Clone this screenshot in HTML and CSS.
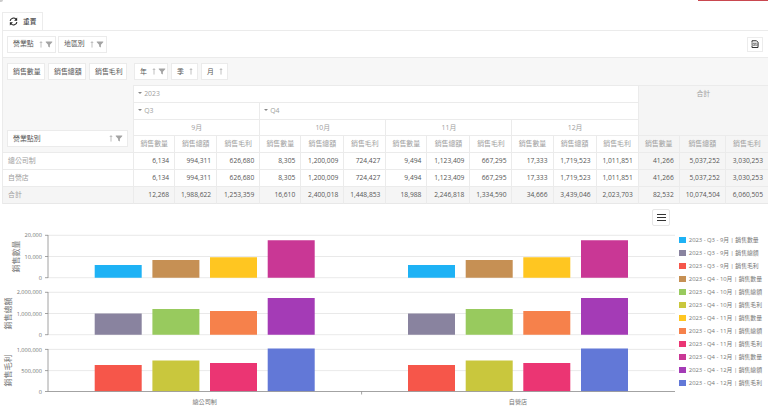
FILE: index.html
```html
<!DOCTYPE html>
<html lang="zh-Hant">
<head>
<meta charset="utf-8">
<title>銷售分析</title>
<link rel="stylesheet" href="styles.css">
</head>
<body>
<svg class="defs" width="0" height="0">
  <symbol id="sort" viewBox="0 0 4 8"><path d="M2 7.5V.8M.6 2.3 2 .8 3.4 2.3" fill="none" stroke="#999" stroke-width=".7"/></symbol>
  <symbol id="funnel" viewBox="0 0 8 8"><path d="M.3.5h7.4v1L5 4.3v3.2L3 6.2V4.3L.3 1.5z" fill="#a3a3a3"/></symbol>
</svg>
<header class="top"><span class="corner"></span><span class="alert"></span></header>
<div class="tab">
  <svg class="sync" viewBox="0 0 16 16"><path d="M2 7a6 6 0 0 1 10.5-3M14 9a6 6 0 0 1-10.5 3" fill="none" stroke="#222" stroke-width="2"/><path d="M14.500 1v5.500H9zM1.500 15V9.500H7z" fill="#222"/></svg>
  <span>重置</span>
</div>
<main class="pivot">
  <div class="filters">
    <div class="field f1">營業點<svg class="sort"><use href="#sort"/></svg><svg class="funnel"><use href="#funnel"/></svg></div>
    <div class="field f2">地區別<svg class="sort"><use href="#sort"/></svg><svg class="funnel"><use href="#funnel"/></svg></div>
    <div class="export"><svg viewBox="0 0 16 16"><path d="M2 5V1.500h9L14 4.500V15H2v-3" fill="none" stroke="#333" stroke-width="2"/><path d="M1 5.500h14v6H1z" fill="#777"/><path d="M3 7l3 3M6 7l-3 3M8 7v3h2M13 7h-2v3h2" fill="none" stroke="#fff"/></svg></div>
  </div>
  <div class="fields">
    <div class="data">
      <div class="field d1">銷售數量</div><div class="field d2">銷售總額</div><div class="field d3">銷售毛利</div>
    </div>
    <div class="cols">
      <div class="field c1">年<svg class="sort"><use href="#sort"/></svg><svg class="funnel"><use href="#funnel"/></svg></div>
      <div class="field c2">季<svg class="sort"><use href="#sort"/></svg></div>
      <div class="field c3">月<svg class="sort"><use href="#sort"/></svg></div>
    </div>
  </div>
  <table>
    <colgroup><col class="w130"><col class="w41"><col class="w42"><col class="w43"><col class="w41"><col class="w43"><col class="w42"><col class="w41"><col class="w43"><col class="w42"><col class="w41"><col class="w43"><col class="w42"><col class="w41"><col class="w46"><col class="w43"></colgroup>
    <thead>
      <tr><th class="rowarea" rowspan="4"><div class="field rf">營業點別<svg class="sort"><use href="#sort"/></svg><svg class="funnel"><use href="#funnel"/></svg></div></th><th class="exp" colspan="12"><i></i>2023</th><th class="grand" colspan="3" rowspan="3">合計</th></tr>
      <tr><th class="exp" colspan="3"><i></i>Q3</th><th class="exp" colspan="9"><i></i>Q4</th></tr>
      <tr class="months"><th colspan="3">9月</th><th colspan="3">10月</th><th colspan="3">11月</th><th colspan="3">12月</th></tr>
      <tr><th>銷售數量</th><th>銷售總額</th><th>銷售毛利</th><th>銷售數量</th><th>銷售總額</th><th>銷售毛利</th><th>銷售數量</th><th>銷售總額</th><th>銷售毛利</th><th>銷售數量</th><th>銷售總額</th><th>銷售毛利</th><th class="g">銷售數量</th><th class="g">銷售總額</th><th class="g">銷售毛利</th></tr>
    </thead>
    <tbody>
      <tr><th>總公司制</th><td>6,134</td><td>994,311</td><td>626,680</td><td>8,305</td><td>1,200,009</td><td>724,427</td><td>9,494</td><td>1,123,409</td><td>667,295</td><td>17,333</td><td>1,719,523</td><td>1,011,851</td><td class="g">41,266</td><td class="g">5,037,252</td><td class="g">3,030,253</td></tr>
      <tr><th>自營店</th><td>6,134</td><td>994,311</td><td>626,680</td><td>8,305</td><td>1,200,009</td><td>724,427</td><td>9,494</td><td>1,123,409</td><td>667,295</td><td>17,333</td><td>1,719,523</td><td>1,011,851</td><td class="g">41,266</td><td class="g">5,037,252</td><td class="g">3,030,253</td></tr>
      <tr class="total"><th>合計</th><td>12,268</td><td>1,988,622</td><td>1,253,359</td><td>16,610</td><td>2,400,018</td><td>1,448,853</td><td>18,988</td><td>2,246,818</td><td>1,334,590</td><td>34,666</td><td>3,439,046</td><td>2,023,703</td><td class="g">82,532</td><td class="g">10,074,504</td><td class="g">6,060,505</td></tr>
    </tbody>
  </table>
</main>
<section class="chart">
  <svg class="plot" viewBox="0 204 676 202" width="676" height="202">
    <g class="grid">
      <path d="M48 235.300H675M48 256.500H675M48 277.700H675M48 292.300H675M48 313.500H675M48 334.700H675M48 349.400H675M48 370.600H675"/>
    </g>
    <g>
      <path fill="#1eb2f5" d="M94.700 265h47v12.800h-47zM408 265h47v12.800h-47z"/>
      <path fill="#c69054" d="M152.400 260h47v17.800h-47zM465.700 260h47v17.800h-47z"/>
      <path fill="#ffc621" d="M210 257.300h47v20.500h-47zM523.300 257.300h47v20.500h-47z"/>
      <path fill="#c93795" d="M267.700 240.300h47v37.500h-47zM581 240.300h47v37.500h-47z"/>
      <path fill="#89839f" d="M94.700 313.600h47v21.200h-47zM408 313.600h47v21.200h-47z"/>
      <path fill="#98ca5e" d="M152.400 309h47v25.800h-47zM465.700 309h47v25.800h-47z"/>
      <path fill="#f6814b" d="M210 311h47v23.800h-47zM523.300 311h47v23.800h-47z"/>
      <path fill="#a43bb6" d="M267.700 298h47v36.800h-47zM581 298h47v36.800h-47z"/>
      <path fill="#f6564a" d="M94.700 365h47v26.300h-47zM408 365h47v26.300h-47z"/>
      <path fill="#c9c73d" d="M152.400 360.500h47v30.800h-47zM465.700 360.500h47v30.800h-47z"/>
      <path fill="#eb3573" d="M210 363h47v28.300h-47zM523.300 363h47v28.300h-47z"/>
      <path fill="#6278d7" d="M267.700 348.400h47v42.900h-47zM581 348.400h47v42.900h-47z"/>
    </g>
    <path class="axis" d="M48 235v43M48 292v43M48 349v42.500H675M45 235.300h3M45 256.500h3M45 277.700h3M45 292.300h3M45 313.500h3M45 334.700h3M45 349.400h3M45 370.600h3M45 391.500h3M361.600 391.500v3"/>
    <g class="ticks">
      <text x="42" y="237.400">20,000</text><text x="42" y="258.700">10,000</text><text x="42" y="280">0</text>
      <text x="42" y="294.400">2,000,000</text><text x="42" y="315.700">1,000,000</text><text x="42" y="337">0</text>
      <text x="42" y="351.500">1,000,000</text><text x="42" y="372.800">500,000</text><text x="42" y="394">0</text>
    </g>
    <g class="titles">
      <text transform="translate(19.200 256.500) rotate(-90)">銷售數量</text>
      <text transform="translate(11.200 313.500) rotate(-90)">銷售總額</text>
      <text transform="translate(11.200 370.500) rotate(-90)">銷售毛利</text>
    </g>
    <g class="cats"><text x="204.700" y="403.600">總公司制</text><text x="518" y="403.600">自營店</text></g>
  </svg>
  <aside>
    <div class="menu"><i></i><i></i><i></i></div>
    <ul>
      <li><b class="k1"></b>2023 - Q3 - 9月 | 銷售數量</li>
      <li><b class="k2"></b>2023 - Q3 - 9月 | 銷售總額</li>
      <li><b class="k3"></b>2023 - Q3 - 9月 | 銷售毛利</li>
      <li><b class="k4"></b>2023 - Q4 - 10月 | 銷售數量</li>
      <li><b class="k5"></b>2023 - Q4 - 10月 | 銷售總額</li>
      <li><b class="k6"></b>2023 - Q4 - 10月 | 銷售毛利</li>
      <li><b class="k7"></b>2023 - Q4 - 11月 | 銷售數量</li>
      <li><b class="k8"></b>2023 - Q4 - 11月 | 銷售總額</li>
      <li><b class="k9"></b>2023 - Q4 - 11月 | 銷售毛利</li>
      <li><b class="k10"></b>2023 - Q4 - 12月 | 銷售數量</li>
      <li><b class="k11"></b>2023 - Q4 - 12月 | 銷售總額</li>
      <li><b class="k12"></b>2023 - Q4 - 12月 | 銷售毛利</li>
    </ul>
  </aside>
</section>
</body>
</html>
```
FILE: styles.css
```css
* { box-sizing: border-box; }
body {
  margin: 0;
  width: 768px;
  height: 406px;
  overflow: hidden;
  background: #fff;
  color: #555;
  font: 6.7px/10px "Open Sans", "Noto Sans CJK TC", sans-serif;
}
.defs { position: absolute; }
.top { display: flex; justify-content: space-between; height: 12px; }
.corner { width: 3px; height: 2px; background: #ccc; border-bottom-right-radius: 3px; }
.alert { width: 70px; height: 1px; background: #c9474f; }
.tab {
  display: flex;
  align-items: center;
  gap: 5px;
  width: 41px;
  height: 18px;
  margin-left: 2px;
  padding-left: 6px;
  border: 1px solid #ececec;
  border-bottom: 0;
  color: #333;
}
.sync { width: 9px; height: 9px; }
.pivot { width: 766px; margin-left: 2px; border-left: 1px solid #ebebeb; border-top: 1px solid #ebebeb; }
.filters { display: flex; align-items: center; gap: 2px; height: 26px; padding: 0 5px 0 4px; }
.field {
  display: flex;
  flex: none;
  align-items: center;
  height: 17px;
  padding-left: 5px;
  border: 1px solid #ebebeb;
  background: #fff;
  color: #555;
  font-size: 6.9px;
  white-space: nowrap;
}
.field .sort { flex: none; width: 4px; height: 7px; margin-left: 5px; }
.field .funnel { flex: none; width: 8px; height: 7px; margin-left: 2px; }
.f1 { width: 49px; }
.f2 { width: 49px; }
.export {
  display: flex;
  align-items: center;
  justify-content: center;
  width: 16px;
  height: 15px;
  margin-left: auto;
  border: 1px solid #ececec;
}
.export svg { width: 8px; height: 8px; }
.fields { display: flex; align-items: center; height: 28px; background: #f7f7f7; border-top: 1px solid #ebebeb; }
.data { display: flex; flex: none; gap: 3px; width: 130px; padding-left: 4px; }
.d1, .d2, .d3 { width: 38px; }
.cols { display: flex; gap: 3px; padding-left: 1px; }
.c1 { width: 34px; }
.c2, .c3 { width: 27px; }
table { table-layout: fixed; width: 765px; border-collapse: separate; border-spacing: 0; }
.w130 { width: 130px; }
.w41 { width: 41px; }
.w42 { width: 42px; }
.w43 { width: 43px; }
.w46 { width: 46px; }
th, td {
  height: 17px;
  padding: 0;
  border-left: 1px solid #ebebeb;
  border-top: 1px solid #ebebeb;
  text-align: center;
  font-weight: 400;
  line-height: 10px;
  white-space: nowrap;
}
th { color: #a0a0a0; font-size: 6.9px; }
td { padding-right: 5px; text-align: right; }
.months th { height: 16px; }
.exp { text-align: left; padding-left: 4px; }
.exp i {
  display: inline-block;
  margin: 0 2px 2px 0;
  border: 2px solid transparent;
  border-top-color: #888;
  border-bottom: 0;
}
.rowarea { vertical-align: bottom; padding: 0 5px 5px 4px; background: #f7f7f7; border: 0; }
.rf { width: 121px; }
.rf .sort { margin-left: auto; }
.rf .funnel { margin-right: 4px; }
.grand { vertical-align: top; padding-top: 3px; }
.grand, .g { background: #f5f5f5; }
tbody th { text-align: left; padding-left: 5px; border-left: 0; }
.total > * { height: 18px; background: #f5f5f5; border-bottom: 1px solid #e8e8e8; }
.chart { display: flex; height: 202px; }
.plot { flex: none; display: block; }
.grid path { fill: none; stroke: #e3e3e3; stroke-width: .8; }
.axis { fill: none; stroke: #8c8c8c; stroke-width: .8; }
.plot text { fill: #777; }
.plot .ticks text { text-anchor: end; font-size: 5.6px; }
.plot .titles text { text-anchor: middle; font-size: 8px; }
.plot .cats text { text-anchor: middle; font-size: 6.1px; }
aside { flex: none; width: 116px; margin-left: -24px; padding-top: 5px; }
.menu {
  display: flex;
  flex-direction: column;
  align-items: center;
  justify-content: center;
  gap: 2px;
  width: 18px;
  height: 17px;
  border: 1px solid #e6e6e6;
  border-radius: 2px;
}
.menu i { width: 9px; height: 1px; background: #333; }
ul { margin: 7.5px 0 0 27.300px; padding: 0; list-style: none; }
li { display: flex; align-items: center; gap: 3px; height: 13.03px; color: #777; font-size: 5.85px; white-space: nowrap; }
li b { flex: none; width: 6.5px; height: 6.5px; }
.k1 { background: #1eb2f5; }
.k2 { background: #89839f; }
.k3 { background: #f6564a; }
.k4 { background: #c69054; }
.k5 { background: #98ca5e; }
.k6 { background: #c9c73d; }
.k7 { background: #ffc621; }
.k8 { background: #f6814b; }
.k9 { background: #eb3573; }
.k10 { background: #c93795; }
.k11 { background: #a43bb6; }
.k12 { background: #6278d7; }
```
